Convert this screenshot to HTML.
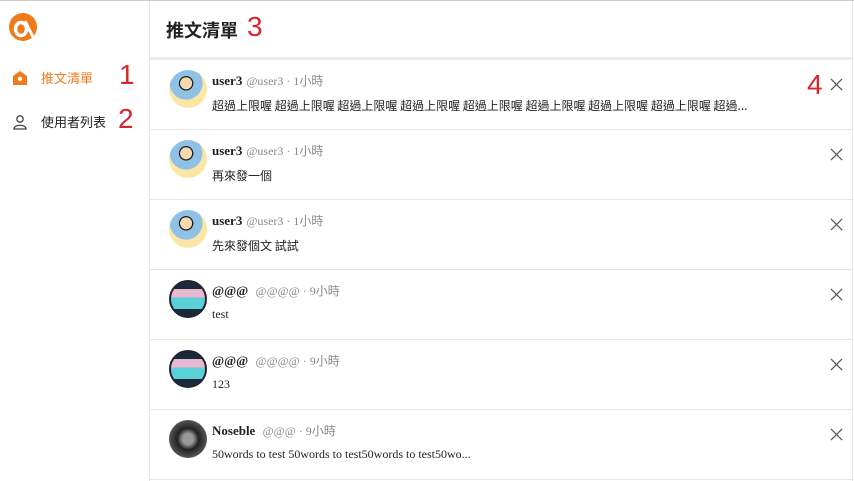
<!DOCTYPE html>
<html><head><meta charset="utf-8"><style>
*{margin:0;padding:0;box-sizing:border-box}
body{width:854px;height:480px;overflow:hidden;background:#fff;font-family:"Liberation Sans","Noto Sans CJK TC",sans-serif;position:relative;border-top:1px solid #ccc}
.side{position:absolute;left:0;top:0;width:150px;height:480px;border-right:1px solid #e6e6e6}
.main{position:absolute;left:150px;top:0;width:703px;height:480px;border-right:1px solid #e6e6e6}
.hdr{height:59px;border-bottom:3px solid #ececec;position:relative}
.hdr h1{position:absolute;left:16px;top:16px;font-size:18px;font-weight:bold;color:#222}
.red{color:#d9262e;font-family:"Liberation Sans",sans-serif;position:absolute;font-size:28px}
.row{height:70px;border-bottom:1px solid #e6e6e6;position:relative}
.av{position:absolute;left:19px;top:10px;width:38px;height:38px;border-radius:50%}
.a1{background:radial-gradient(circle at 45% 35%,#f5d9b0 0 18%,#222 19% 22%,#8fc1e6 23% 50%,#fbe6a6 51%)}
.a2{background:linear-gradient(#1a2a3a 0 20%,#e8b8d0 20% 45%,#5cd0d8 45% 80%,#1a2a3a 80%);border:2px solid #223}
.a3{background:radial-gradient(circle,#999 0 20%,#222 40%,#555 70%,#222)}
.nm{position:absolute;left:62px;top:12px;font-family:"Liberation Serif","Noto Sans CJK TC",serif;font-size:13px;color:#333;white-space:nowrap}
.nm b{color:#222;margin-right:4px}
.nm span{color:#888;font-size:12px}
.tx{position:absolute;left:62px;top:37px;font-size:12px;color:#222;white-space:nowrap;font-family:"Liberation Serif","Noto Sans CJK TC",serif}
.x{position:absolute;right:9px;top:18px;width:13px;height:13px}
.nav{position:absolute;left:12px;font-size:13px;display:flex;align-items:center}
</style></head><body>
<div class="side">
<svg style="position:absolute;left:8px;top:11px" width="30" height="30" viewBox="0 0 30 30"><circle cx="15" cy="15" r="14" fill="#f07a1a"/><ellipse cx="13" cy="17" rx="5.5" ry="6.5" fill="none" stroke="#fff" stroke-width="3.5"/><path d="M17 9 L25 25" stroke="#fff" stroke-width="3"/></svg>
<div class="nav" style="top:67px;color:#f07a1a"><svg width="16" height="16" viewBox="0 0 16 16"><path d="M8 1 L15 6 L15 15 L1 15 L1 6 Z" fill="#f07a1a"/><circle cx="8" cy="9" r="2.2" fill="#fff"/></svg><span style="margin-left:13px">推文清單</span></div>
<span class="red" style="left:119px;top:58px">1</span>
<div class="nav" style="top:111px;color:#222"><svg width="16" height="16" viewBox="0 0 16 16" fill="none" stroke="#444" stroke-width="1.3"><circle cx="8" cy="5" r="3.2"/><path d="M2 15 C2 10 14 10 14 15 Z"/></svg><span style="margin-left:13px">使用者列表</span></div>
<span class="red" style="left:118px;top:102px">2</span>
</div>
<div class="main">
<div class="hdr"><h1>推文清單</h1><span class="red" style="left:97px;top:10px">3</span></div>
<div class="row"><div class="av a1"></div><div class="nm"><b>user3</b><span>@user3 · 1小時</span></div><div class="tx" style="font-family:'Noto Sans CJK TC',sans-serif;font-size:12px">超過上限喔 超過上限喔 超過上限喔 超過上限喔 超過上限喔 超過上限喔 超過上限喔 超過上限喔 超過...</div><span class="red" style="left:657px;top:9px">4</span><svg class="x" viewBox="0 0 14 14"><path d="M1 1L13 13M13 1L1 13" stroke="#555" stroke-width="1.3"/></svg></div>
<div class="row"><div class="av a1"></div><div class="nm"><b>user3</b><span>@user3 · 1小時</span></div><div class="tx" style="font-family:'Noto Sans CJK TC',sans-serif">再來發一個</div><svg class="x" viewBox="0 0 14 14"><path d="M1 1L13 13M13 1L1 13" stroke="#555" stroke-width="1.3"/></svg></div>
<div class="row"><div class="av a1"></div><div class="nm"><b>user3</b><span>@user3 · 1小時</span></div><div class="tx" style="font-family:'Noto Sans CJK TC',sans-serif">先來發個文 試試</div><svg class="x" viewBox="0 0 14 14"><path d="M1 1L13 13M13 1L1 13" stroke="#555" stroke-width="1.3"/></svg></div>
<div class="row"><div class="av a2"></div><div class="nm"><b>@@@</b> <span>@@@@ · 9小時</span></div><div class="tx">test</div><svg class="x" viewBox="0 0 14 14"><path d="M1 1L13 13M13 1L1 13" stroke="#555" stroke-width="1.3"/></svg></div>
<div class="row"><div class="av a2"></div><div class="nm"><b>@@@</b> <span>@@@@ · 9小時</span></div><div class="tx">123</div><svg class="x" viewBox="0 0 14 14"><path d="M1 1L13 13M13 1L1 13" stroke="#555" stroke-width="1.3"/></svg></div>
<div class="row"><div class="av a3"></div><div class="nm"><b>Noseble</b> <span>@@@ · 9小時</span></div><div class="tx">50words to test 50words to test50words to test50wo...</div><svg class="x" viewBox="0 0 14 14"><path d="M1 1L13 13M13 1L1 13" stroke="#555" stroke-width="1.3"/></svg></div>
</div>
</body></html>
